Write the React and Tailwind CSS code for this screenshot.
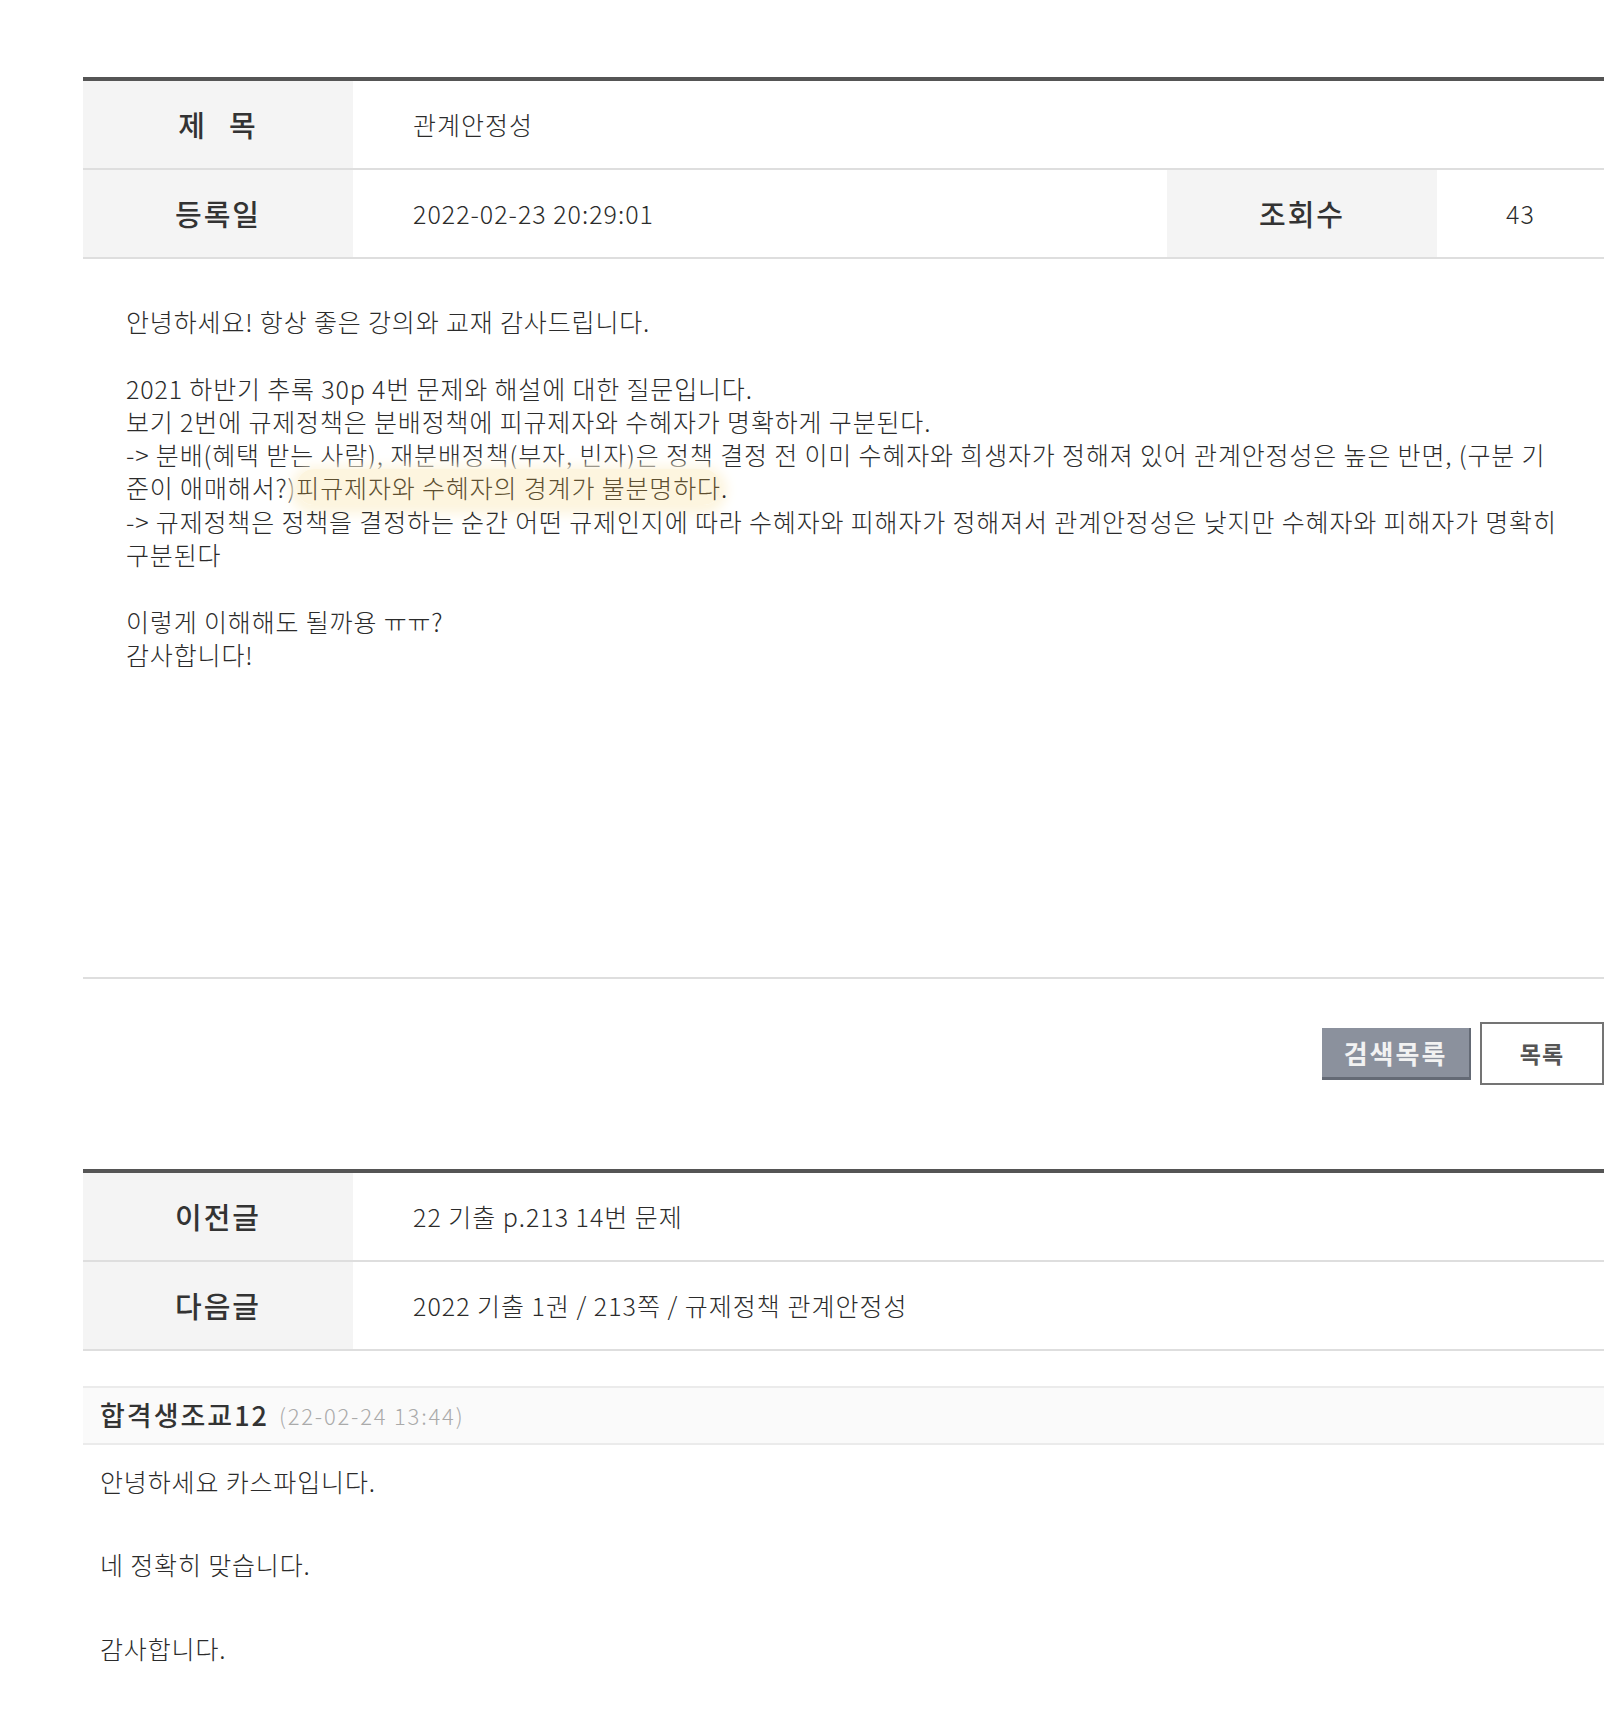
import React from 'react'

const font = { fontFamily: '"Noto Sans CJK KR", "Noto Sans", sans-serif' }

function InfoRow({ label, children, extra }) {
    return (
        <div className="flex h-[89px] border-b-2 border-[#dedede]">
            <div className="w-[270px] shrink-0 bg-[#f4f4f4] flex items-center justify-center text-[29px] font-medium tracking-[2px] text-[#333]">
                {label}
            </div>
            <div className="flex-1 flex items-center pl-[60px] text-[25px] font-light tracking-[1px] text-[#2b2b2b]">{children}</div>
            {extra}
        </div>
    )
}

export default function App() {
    return (
        <div className="min-h-[1721px] w-[1619px] bg-white" style={font}>
            <div className="ml-[83px] w-[1521px] pt-[77px]">
                {/* post header */}
                <div className="border-t-4 border-[#555]">
                    <InfoRow label={<span className="flex gap-[22px]"><span>제</span><span>목</span></span>}>관계안정성</InfoRow>
                    <InfoRow
                        label="등록일"
                        extra={
                            <>
                                <div className="w-[270px] shrink-0 bg-[#f4f4f4] flex items-center justify-center text-[29px] font-medium tracking-[2px] text-[#333]">조회수</div>
                                <div className="w-[167px] shrink-0 flex items-center justify-center text-[25px] font-light tracking-[1px] text-[#2b2b2b]">43</div>
                            </>
                        }
                    >
                        2022-02-23 20:29:01
                    </InfoRow>
                </div>

                {/* body */}
                <div className="h-[720px] border-b-2 border-[#dedede] pt-[46px] pl-[43px] text-[25px] font-light tracking-[0.85px] leading-[33.3px] text-[#2b2b2b]">
                    <p>안녕하세요! 항상 좋은 강의와 교재 감사드립니다.</p>
                    <p>&nbsp;</p>
                    <p>2021 하반기 추록 30p 4번 문제와 해설에 대한 질문입니다.</p>
                    <p>보기 2번에 규제정책은 분배정책에 피규제자와 수혜자가 명확하게 구분된다.</p>
                    <p>
                        -&gt; 분배(혜택 받는 사람), 재분배정책(부자, 빈자)은 정책 결정 전 이미 수혜자와 희생자가 정해져 있어 관계안정성은 높은 반면, (구분 기<br />
                        준이 애매해서?)<span className="bg-[#fdf5df] text-[#5e4f30] shadow-[0_3px_12px_6px_#fdf5df] rounded-full">피규제자와 수혜자의 경계가 불분명하다</span>.
                    </p>
                    <p>
                        -&gt; 규제정책은 정책을 결정하는 순간 어떤 규제인지에 따라 수혜자와 피해자가 정해져서 관계안정성은 낮지만 수혜자와 피해자가 명확히<br />
                        구분된다
                    </p>
                    <p>&nbsp;</p>
                    <p>이렇게 이해해도 될까용 ㅠㅠ?</p>
                    <p>감사합니다!</p>
                </div>

                {/* buttons */}
                <div className="flex justify-end items-center gap-[9px] mt-[43px]">
                    <button className="w-[149px] h-[52px] bg-[#8b919d] border-b-[3px] border-r-2 border-[#646a75] text-[26px] font-bold text-[#f2f2f2] tracking-[2px]">
                        검색목록
                    </button>
                    <button className="w-[124px] h-[63px] bg-white border-2 border-[#747474] text-[23px] font-bold text-[#555] tracking-[1px]">
                        목록
                    </button>
                </div>

                {/* prev / next */}
                <div className="mt-[84px] border-t-4 border-[#555]">
                    <InfoRow label="이전글">22 기출 p.213 14번 문제</InfoRow>
                    <InfoRow label="다음글">2022 기출 1권 / 213쪽 / 규제정책 관계안정성</InfoRow>
                </div>

                {/* comment */}
                <div className="mt-[35px] border-t-2 border-[#ebebeb]">
                    <div className="h-[57px] bg-[#fafafa] border-b-2 border-[#ebebeb] flex items-center pl-[17px] gap-[10px]">
                        <span className="text-[27px] font-medium tracking-[2px] text-[#333]">합격생조교12</span>
                        <span className="text-[22px] font-light tracking-[1.8px] text-[#aaa]">(22-02-24 13:44)</span>
                    </div>
                    <div className="pl-[17px] pt-[16px] text-[25px] font-light tracking-[0.85px] text-[#2b2b2b] leading-[41.7px]">
                        <p>안녕하세요 카스파입니다.</p>
                        <p>&nbsp;</p>
                        <p>네 정확히 맞습니다.</p>
                        <p>&nbsp;</p>
                        <p>감사합니다.</p>
                    </div>
                </div>
            </div>
        </div>
    )
}
